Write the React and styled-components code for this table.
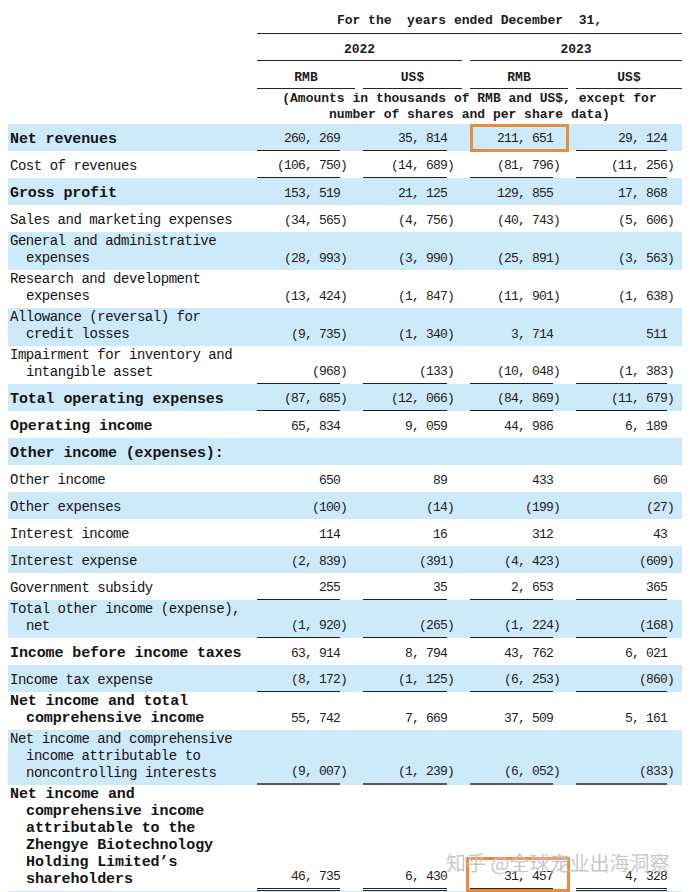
import React from 'react'
import styled, { createGlobalStyle, css } from 'styled-components'

const COLS = '241px 98px 99px 98px 106px'

const rows = [
  { label: ['Net revenues'], bold: true, values: ['260, 269', '35, 814', '211, 651', '29, 124'], line: 'single', box: 'top' },
  { label: ['Cost of revenues'], values: ['(106, 750)', '(14, 689)', '(81, 796)', '(11, 256)'], line: 'single' },
  { label: ['Gross profit'], bold: true, values: ['153, 519', '21, 125', '129, 855', '17, 868'] },
  { label: ['Sales and marketing expenses'], values: ['(34, 565)', '(4, 756)', '(40, 743)', '(5, 606)'] },
  { label: ['General and administrative', 'expenses'], values: ['(28, 993)', '(3, 990)', '(25, 891)', '(3, 563)'] },
  { label: ['Research and development', 'expenses'], values: ['(13, 424)', '(1, 847)', '(11, 901)', '(1, 638)'] },
  { label: ['Allowance (reversal) for', 'credit losses'], values: ['(9, 735)', '(1, 340)', '3, 714', '511'] },
  { label: ['Impairment for inventory and', 'intangible asset'], values: ['(968)', '(133)', '(10, 048)', '(1, 383)'], line: 'single' },
  { label: ['Total operating expenses'], bold: true, values: ['(87, 685)', '(12, 066)', '(84, 869)', '(11, 679)'], line: 'single' },
  { label: ['Operating income'], bold: true, values: ['65, 834', '9, 059', '44, 986', '6, 189'] },
  { label: ['Other income (expenses):'], bold: true, values: ['', '', '', ''] },
  { label: ['Other income'], values: ['650', '89', '433', '60'] },
  { label: ['Other expenses'], values: ['(100)', '(14)', '(199)', '(27)'] },
  { label: ['Interest income'], values: ['114', '16', '312', '43'] },
  { label: ['Interest expense'], values: ['(2, 839)', '(391)', '(4, 423)', '(609)'] },
  { label: ['Government subsidy'], values: ['255', '35', '2, 653', '365'], line: 'single' },
  { label: ['Total other income (expense),', 'net'], values: ['(1, 920)', '(265)', '(1, 224)', '(168)'], line: 'single' },
  { label: ['Income before income taxes'], bold: true, values: ['63, 914', '8, 794', '43, 762', '6, 021'] },
  { label: ['Income tax expense'], values: ['(8, 172)', '(1, 125)', '(6, 253)', '(860)'], line: 'single' },
  { label: ['Net income and total', 'comprehensive income'], bold: true, values: ['55, 742', '7, 669', '37, 509', '5, 161'] },
  {
    label: ['Net income and comprehensive', 'income attributable to', 'noncontrolling interests'],
    values: ['(9, 007)', '(1, 239)', '(6, 052)', '(833)'],
    line: 'thick',
  },
  {
    label: [
      'Net income and',
      'comprehensive income',
      'attributable to the',
      'Zhengye Biotechnology',
      'Holding Limited’s',
      'shareholders',
    ],
    bold: true,
    values: ['46, 735', '6, 430', '31, 457', '4, 328'],
    line: 'double',
    box: 'bottom',
  },
  { label: [''], values: ['', '', '', ''] },
]

const Num = ({ value }) => {
  if (!value) return null
  if (value.startsWith('(')) {
    return (
      <Figure>
        {value.slice(0, -1)}
        <Close>)</Close>
      </Figure>
    )
  }
  return <Figure>{value}</Figure>
}

export default function App() {
  return (
    <Page>
      <GlobalStyle />
      <HeaderGrid>
        <HeadCell $col="2 / 6" $pt={13} $pb={4} $line>
          For the  years ended December  31,
        </HeadCell>
        <HeadCell $col="2 / 4" $pt={8} $pb={2} $line>2022</HeadCell>
        <HeadCell $col="4 / 6" $pt={8} $pb={2} $line>2023</HeadCell>
        <HeadCell $col="2 / 3" $pt={9} $pb={2} $line>RMB</HeadCell>
        <HeadCell $col="3 / 4" $pt={9} $pb={2} $line>US$</HeadCell>
        <HeadCell $col="4 / 5" $pt={9} $pb={2} $line>RMB</HeadCell>
        <HeadCell $col="5 / 6" $pt={9} $pb={2} $line>US$</HeadCell>
        <HeadCell $col="2 / 6" $pt={2} $pb={1}>
          (Amounts in thousands of RMB and US$, except for
          <br />
          number of shares and per share data)
        </HeadCell>
      </HeaderGrid>

      {rows.map((row, i) => (
        <Row key={i} $shade={i % 2 === 0}>
          <Label $bold={row.bold}>
            {row.label.map((text, j) => (
              <LabelLine key={j}>{text}</LabelLine>
            ))}
          </Label>
          {row.values.map((v, j) => (
            <ValueCell key={j}>
              <ValueBox $line={row.line}>
                <Num value={v} />
              </ValueBox>
              {j === 2 && row.box === 'top' && <Highlight $top={0} $left={0} $right={-1} $bottom={-1} />}
              {j === 2 && row.box === 'bottom' && <Highlight $top={72} $left={-4} $right={-2} $bottom={-1} />}
            </ValueCell>
          ))}
        </Row>
      ))}

      <Watermark>知乎 @全球宠业出海洞察</Watermark>
    </Page>
  )
}

const GlobalStyle = createGlobalStyle`
  html, body {
    margin: 0;
    padding: 0;
    background: #fff;
  }
  body {
    font-family: "Liberation Mono", "DejaVu Sans Mono", monospace;
    color: #141414;
  }
`

const Page = styled.div`
  position: relative;
  width: 692px;
  height: 892px;
  overflow: hidden;
  box-sizing: border-box;
  padding: 0 10px 0 8px;
`

const HeaderGrid = styled.div`
  display: grid;
  grid-template-columns: ${COLS};
  column-gap: 8px;
  font-weight: 700;
  font-size: 13px;
  line-height: 16px;
  color: #1b1b1b;
`

const HeadCell = styled.div`
  grid-column: ${(p) => p.$col};
  text-align: center;
  white-space: pre;
  padding-top: ${(p) => p.$pt}px;
  padding-bottom: ${(p) => p.$pb}px;
  ${(p) =>
    p.$line &&
    css`
      border-bottom: 1px solid #262626;
    `}
`

const Row = styled.div`
  display: grid;
  grid-template-columns: ${COLS};
  column-gap: 8px;
  min-height: 27px;
  background: ${(p) => (p.$shade ? '#cdeafa' : 'transparent')};
`

const Label = styled.div`
  align-self: end;
  padding: 1px 0 3px 2px;
  line-height: 17px;
  white-space: pre;
  font-size: ${(p) => (p.$bold ? '15px' : '14px')};
  font-weight: ${(p) => (p.$bold ? 700 : 400)};
  letter-spacing: ${(p) => (p.$bold ? '-0.1px' : '-0.47px')};
`

const LabelLine = styled.div`
  & + & {
    padding-left: 16px;
  }
`

const ValueCell = styled.div`
  position: relative;
  display: flex;
  padding-right: 15px;
`

const lines = {
  single: '1px solid #1e1e1e',
  thick: '2px solid #5a5a5a',
  double: '3px double #222',
}

const ValueBox = styled.div`
  flex: 1;
  display: flex;
  align-items: flex-end;
  justify-content: flex-end;
  padding-bottom: 3px;
  border-bottom: ${(p) => (p.$line ? lines[p.$line] : 'none')};
`

const Figure = styled.span`
  font-size: 13px;
  line-height: 17px;
  letter-spacing: -0.8px;
  white-space: pre;
  color: #1c1c1c;
`

const Close = styled.span`
  margin-right: -7px;
`

const Highlight = styled.span`
  position: absolute;
  top: ${(p) => p.$top}px;
  left: ${(p) => p.$left}px;
  right: ${(p) => p.$right}px;
  bottom: ${(p) => p.$bottom}px;
  border: 3px solid #e98b3c;
  pointer-events: none;
`

const Watermark = styled.div`
  position: absolute;
  left: 446px;
  top: 850px;
  font-family: "Noto Sans CJK SC", "Noto Sans", sans-serif;
  font-size: 20px;
  line-height: 26px;
  color: rgba(150, 150, 150, 0.55);
  text-shadow: 0 0 2px rgba(255, 255, 255, 0.9);
  white-space: nowrap;
  pointer-events: none;
`
